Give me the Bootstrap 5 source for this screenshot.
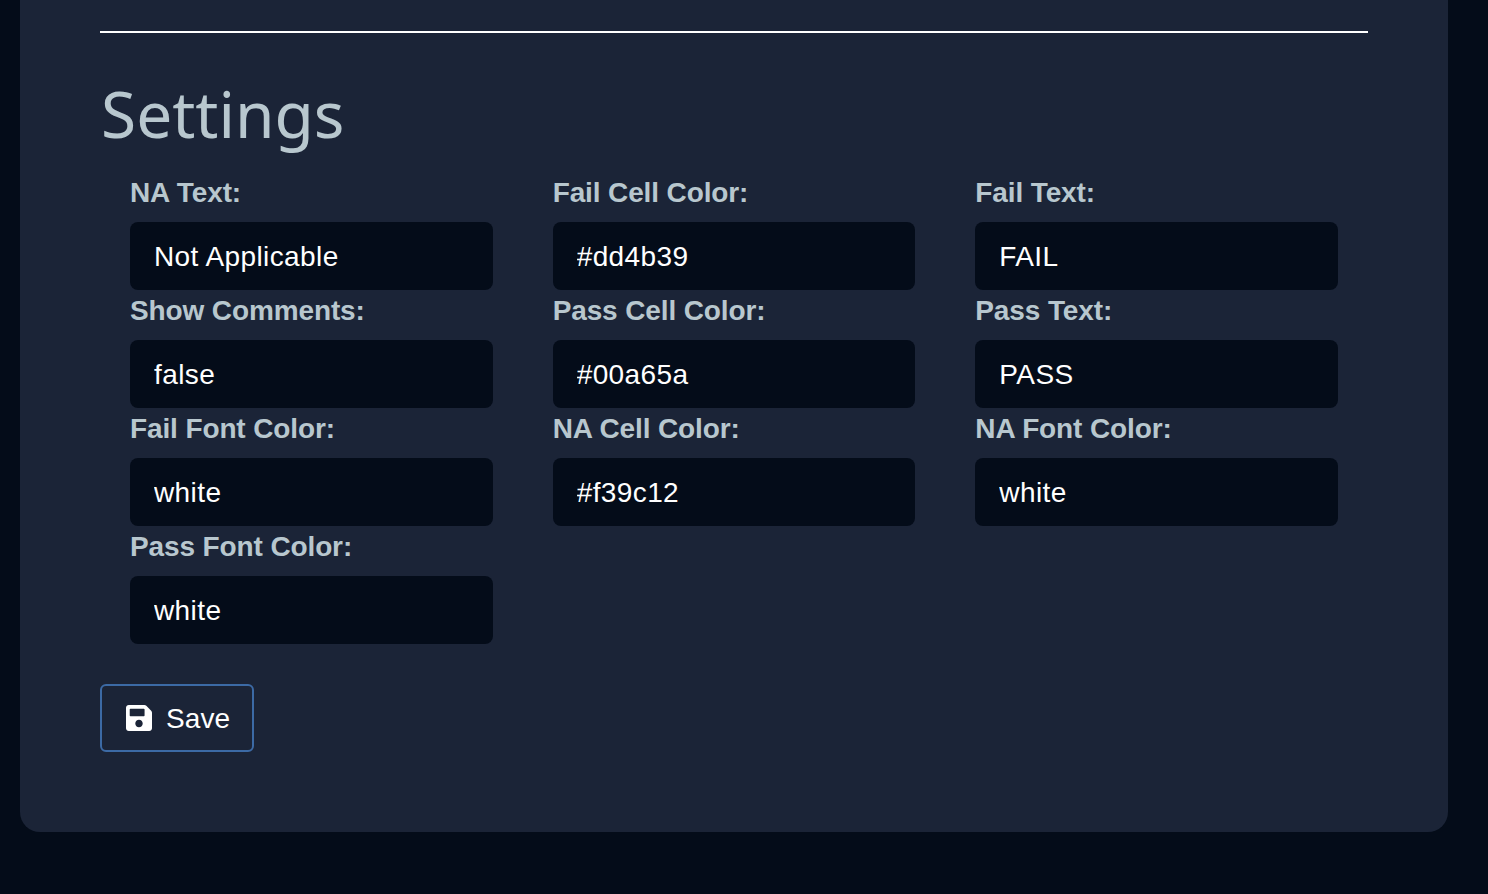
<!DOCTYPE html>
<html lang="en">
<head>
<meta charset="utf-8">
<title>Settings</title>
<link href="https://cdn.jsdelivr.net/npm/bootstrap@5.3.0/dist/css/bootstrap.min.css" rel="stylesheet">
<style>
html, body { height: 894px; overflow: hidden; }
body { background: #040c19; font-family: "Liberation Sans", Arial, sans-serif; }
.panel { margin: 0 40px 0 20px; width: 1428px; padding: 31px 80px 80px; background: #1b2437; border-radius: 0 0 20px 20px; }
.rule { margin: 0 0 38px; border: 0; border-top: 2px solid #fff; opacity: 1; }
.page-title { margin: 0 0 16px; height: 85px; font-family: "Noto Sans", sans-serif; font-weight: 400; font-size: 64px; line-height: 85px; color: #b8c7ce; padding-left: 1px; }
.field-grid { --bs-gutter-x: 60px; margin: 0 0 40px; }
.field { height: 118px; }
.field-label { display: block; margin: 0 0 8px; height: 42px; font-size: 28px; letter-spacing: -.12px; line-height: 42px; font-weight: 700; color: #b8c7ce; }
.field-input.form-control { height: 68px; padding: 2px 24px 0; font-size: 28px; letter-spacing: .4px; color: #fff; background: #040c19; border: 0; border-radius: 8px; box-shadow: none; }
.save-btn.btn { height: 68px; width: 154px; padding: 2px 0 0 24px; gap: 14px; font-size: 28px; letter-spacing: .1px; color: #fff; background: transparent; border: 2px solid #3c6aa5; border-radius: 6px; }
.save-btn svg { flex: 0 0 26px; width: 26px; height: 30px; margin-top: -3px; fill: #fff; }
</style>
</head>
<body>
<main class="panel">
  <hr class="rule">
  <h1 class="page-title">Settings</h1>
  <div class="row field-grid">
    <div class="col-4 field"><label class="field-label" for="f1">NA Text:</label><input class="form-control field-input" id="f1" value="Not Applicable"></div>
    <div class="col-4 field"><label class="field-label" for="f2">Fail Cell Color:</label><input class="form-control field-input" id="f2" value="#dd4b39"></div>
    <div class="col-4 field"><label class="field-label" for="f3">Fail Text:</label><input class="form-control field-input" id="f3" value="FAIL"></div>
    <div class="col-4 field"><label class="field-label" for="f4">Show Comments:</label><input class="form-control field-input" id="f4" value="false"></div>
    <div class="col-4 field"><label class="field-label" for="f5">Pass Cell Color:</label><input class="form-control field-input" id="f5" value="#00a65a"></div>
    <div class="col-4 field"><label class="field-label" for="f6">Pass Text:</label><input class="form-control field-input" id="f6" value="PASS"></div>
    <div class="col-4 field"><label class="field-label" for="f7">Fail Font Color:</label><input class="form-control field-input" id="f7" value="white"></div>
    <div class="col-4 field"><label class="field-label" for="f8">NA Cell Color:</label><input class="form-control field-input" id="f8" value="#f39c12"></div>
    <div class="col-4 field"><label class="field-label" for="f9">NA Font Color:</label><input class="form-control field-input" id="f9" value="white"></div>
    <div class="col-4 field"><label class="field-label" for="f10">Pass Font Color:</label><input class="form-control field-input" id="f10" value="white"></div>
  </div>
  <button type="button" class="btn save-btn d-inline-flex align-items-center">
    <svg viewBox="0 0 448 512" aria-hidden="true"><path d="M433.941 129.941l-83.882-83.882A48 48 0 0 0 316.118 32H48C21.49 32 0 53.49 0 80v352c0 26.51 21.49 48 48 48h352c26.51 0 48-21.49 48-48V163.882a48 48 0 0 0-14.059-33.941zM224 416c-35.346 0-64-28.654-64-64 0-35.346 28.654-64 64-64s64 28.654 64 64c0 35.346-28.654 64-64 64zm96-304.52V212c0 6.627-5.373 12-12 12H76c-6.627 0-12-5.373-12-12V108c0-6.627 5.373-12 12-12h228.52c3.183 0 6.235 1.264 8.485 3.515l3.48 3.48A11.996 11.996 0 0 1 320 111.48z"/></svg>
    <span>Save</span>
  </button>
</main>
<script src="https://cdn.jsdelivr.net/npm/bootstrap@5.3.0/dist/js/bootstrap.bundle.min.js"></script>
</body>
</html>
